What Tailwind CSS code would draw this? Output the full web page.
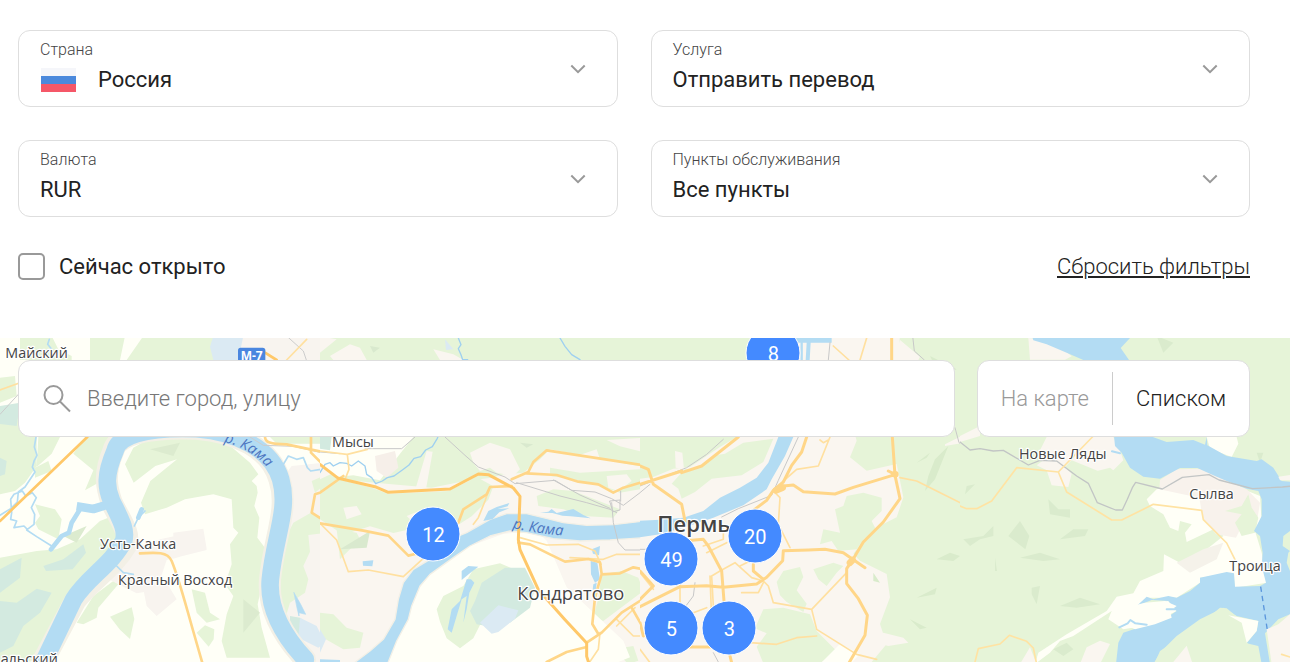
<!DOCTYPE html>
<html lang="ru">
<head>
  <meta charset="UTF-8">
  <meta name="viewport" content="width=device-width, initial-scale=1.0">
  <title>Пункты обслуживания</title>
  <script src="https://cdn.jsdelivr.net/npm/@tailwindcss/browser@4"></script>
  <style>
    body { font-family: Roboto, sans-serif; }
  </style>
</head>
<body class="min-h-screen flex flex-col bg-white text-[#222]">

<!-- Filters -->
<form class="pt-[30px] pb-[58px] pl-[18px] pr-10">
  <div class="grid grid-cols-2 gap-[33px]">
    <div class="h-[77px] flex items-center border border-[#dedede] rounded-xl pl-[21px] pr-[31px]">
      <div class="flex-1 pt-0.5">
        <label for="country" class="block text-base leading-5 font-light text-[#444]">Страна</label>
        <div class="flex items-center gap-[22px] h-10">
          <svg class="w-9 h-6" viewBox="0 0 36 24" aria-hidden="true">
            <path fill="#f5f6fa" d="M1 0h35v8H1z"/>
            <path fill="#4b89dc" d="M1 8h35v8H1z"/>
            <path fill="#f55768" d="M1 16h35v8H1z"/>
          </svg>
          <select id="country" class="flex-1 appearance-none bg-transparent text-[22px] leading-8"><option>Россия</option></select>
        </div>
      </div>
      <svg class="w-4 h-4" viewBox="0 0 16 16" fill="none" stroke="#999" stroke-width="2" aria-hidden="true"><path d="M1.300 4.500 8 11.200l6.700-6.700"/></svg>
    </div>
    <div class="h-[77px] flex items-center border border-[#dedede] rounded-xl pl-[21px] pr-[31px]">
      <div class="flex-1 pt-0.5">
        <label for="service" class="block text-base leading-5 font-light text-[#444]">Услуга</label>
        <div class="flex items-center h-10">
          <select id="service" class="flex-1 appearance-none bg-transparent text-[22px] leading-8"><option>Отправить перевод</option></select>
        </div>
      </div>
      <svg class="w-4 h-4" viewBox="0 0 16 16" fill="none" stroke="#999" stroke-width="2" aria-hidden="true"><path d="M1.300 4.500 8 11.200l6.700-6.700"/></svg>
    </div>
    <div class="h-[77px] flex items-center border border-[#dedede] rounded-xl pl-[21px] pr-[31px]">
      <div class="flex-1 pt-0.5">
        <label for="currency" class="block text-base leading-5 font-light text-[#444]">Валюта</label>
        <div class="flex items-center h-10">
          <select id="currency" class="flex-1 appearance-none bg-transparent text-[22px] leading-8"><option>RUR</option></select>
        </div>
      </div>
      <svg class="w-4 h-4" viewBox="0 0 16 16" fill="none" stroke="#999" stroke-width="2" aria-hidden="true"><path d="M1.300 4.500 8 11.200l6.700-6.700"/></svg>
    </div>
    <div class="h-[77px] flex items-center border border-[#dedede] rounded-xl pl-[21px] pr-[31px]">
      <div class="flex-1 pt-0.5">
        <label for="points" class="block text-base leading-5 font-light text-[#444]">Пункты обслуживания</label>
        <div class="flex items-center h-10">
          <select id="points" class="flex-1 appearance-none bg-transparent text-[22px] leading-8"><option>Все пункты</option></select>
        </div>
      </div>
      <svg class="w-4 h-4" viewBox="0 0 16 16" fill="none" stroke="#999" stroke-width="2" aria-hidden="true"><path d="M1.300 4.500 8 11.200l6.700-6.700"/></svg>
    </div>
  </div>
  <div class="mt-9 flex items-center justify-between text-[22px] leading-[27px]">
    <label class="flex items-center gap-3.5">
      <input type="checkbox" class="appearance-none w-[27px] h-[27px] border-2 border-[#999] rounded-[5px] bg-white checked:bg-[#448aff]">
      Сейчас открыто
    </label>
    <button type="reset" class="font-light underline underline-offset-2 decoration-2 decoration-[#222]">Сбросить фильтры</button>
  </div>
</form>

<!-- Map -->
<main class="relative flex-1 min-h-[324px] overflow-hidden bg-[#e6f4d8]">
  <svg class="absolute inset-0 w-full h-full" viewBox="0 0 3870 972" preserveAspectRatio="xMidYMin slice" fill="none" stroke-linejoin="round" stroke-linecap="round" role="img" aria-label="Карта Перми">

    <!-- Tile 1 -->
    <svg x="0" y="-6" width="962" height="984">
      <path fill="#fffff7" d="M0 0h970v984H0z"/>
      <g fill="#e6f4d8">
        <path d="M60 0h95l20 40 40 20v12H60zM270 0h105l-15 72h-90zM430 0h300l90 72H380zM0 125l45-5 5 60-50 20zM0 225h110v165l-35 50-30 25-45 10zM115 303h65l-25 50-45 40zM255 303h110l-55 90-20 50-35 20 25-60-60-50z"/>
        <path d="M375 385l25-50 45-25 115-8 120 18 70 60 25 35-20 20 15 15 3 20-10 40 15 35-6 60 30 40-14 90-15 70 12 70 25 90H680l-15-50 15-80 20-55-25-35 20-60-5-60 25-35-15-15-5-85-55-15-85 15-55 25-65 20-12-35 28-65 80-65-65 20-65 50z"/>
        <path d="M0 665l110-20 60-5 70-30 60-55 25-10 30 50-10 50-115 110-50 70-40 80-40 80-100 5z"/>
        <path d="M105 505l60 15 20 30-10 60-60-30-10-20 15-20zM330 842l65-28 8 35-13 60-30-28zM590 890l25-22 28 12-2 30-15 22zM575 760l40 10 15 60 30 20-40 10-30-30zM230 860l50-80 60-45 15 10-60 70-5 30-40 20zM105 395l40-20 10 30-50 20z"/>
      </g>
      <g fill="#dcebcf"><path d="M730 790l50 40-50 60zM450 340l90-20-20 40zM190 600l70-30-30 50z"/></g>
      <g fill="#f8f4ef">
        <path d="M400 640l80-30 130-28 10 60-120 30-30 90-60 10-80-40zM520 590l90-12 10 60-100 30z"/>
        <path d="M845 430l30-40 95-10v604H910l-60-120-20-90 40-200z"/>
        <path d="M430 760l70-20 30 50-60 50-30-30zM640 0h330v90H650z"/>
      </g>
      <g fill="#e6f4d8">
        <path d="M842 720l18-120 20-40 50-28 35 10v50l-40 5 5 50-20 43 15 40-10 40-45 30-15 50-15-50zM935 435l35-15v30l-25 20zM810 303h150v20H830z"/>
      </g>
      <g fill="#d3eae0">
        <path d="M0 700l65-35-5 60-60 45zM0 795l50 5 60-42 45 12-35 60-50 40-30 60-40 20zM130 690l60-20 60-45 8 25-40 50-80 5zM0 210l60-10-10 70-50-6zM0 365l20 10-5 40-15 5zM870 840l30 5 40 30-40 40-30-40z"/>
      </g>
      <path fill="#dbeaf3" d="M640 0h90l-15 72h-75l-10-40zM900 845l50 25 25 50-20 15-60-30z"/>
      <!-- river with its banks -->
      <path stroke="#f3f0e6" stroke-width="66" d="M590 278C430 272 350 300 340 345c-30 70-20 110-5 155 30 60 55 90 45 125-40 70-110 110-155 170L125 984M590 278c120 10 222 60 248 152 30 90-15 170-28 300-8 90 40 170 105 240"/>
      <g stroke="#b3dcf3">
        <path stroke-width="53" d="M590 278C430 272 355 300 345 345c-30 70-28 110-10 150 28 58 45 85 36 120-35 70-110 110-150 175L128 984M590 278c120 10 225 60 252 152 26 90-18 170-31 300-8 90 40 170 105 240"/>
        <path stroke-width="26" stroke-linecap="butt" d="M325 505l-45 14-50-8"/>
        <path stroke-width="14" d="M240 520l-25 40-8 30-22 10-32 40M415 545l10-25"/>
        <path stroke-width="5" d="M80 582l30 20 45 28M108 303l-5 30 8 25-8 15-6 20 8 15-30 45-20 15-3 30-20 20-32 20M35 530l-3 20 18 5-8 20 30-5 10 10 20-15 2-30-10-20 15-30-12-15-20 10-10-15-25 10-10 15zM148 10l-5 15 12 15M850 385l15-25 25 10 20-5 12 30 10 10 30-5M403 570l12-25 20-20M350 690l20 20 30 5"/>
        <path fill="#b3dcf3" stroke-width="2" d="M882 770l20 35 15 30-20-5v10l-5-20z"/>
      </g>
      <!-- roads -->
      <path stroke="#ccc" stroke-width="3" d="M0 235l55-60M860 0l50 45 10 30M750 303l40 25 90 3 80 18"/>
      <path stroke="#ffe0a0" stroke-width="5" d="M0 162l60-22M860 72l60-62"/>
      <g stroke="#ffc869" stroke-width="8">
        <path d="M0 555l262-252M795 50l35 22"/>
        <path stroke="#ffd688" d="M420 652c50-3 83-5 95 23 25 60 35 110 93 309M795 303c0 15 15 22 65 22l105 22M933 303v47l60 60M990 460l-45 15-10 55 58 37"/>
      </g>
    </svg>

    <!-- Tile 2 -->
    <svg x="960" y="-6" width="962" height="984">
      <path fill="#faf6f0" d="M0 0h970v984H0z"/>
      <g fill="#e6f4d8">
        <path d="M0 0h970v80H0zM270 303h700v90L690 340l-30 30-50 40-60 5-35 10-80 10-100 20-120-10L50 430l-50 40V430z"/>
        <path d="M0 475l55-45 100 25 50 18 180-8 85-42 50 28-15 40-50 50-40 25-25 10-80-5-90 20-70-20-80 25-70-46z"/>
        <path d="M650 480l50-20 60 5 140 55-20 25-90-5-60-20-75-10zM50 580l60 10 10 20-60 60zM690 395l90 15 180-10v60l-60 10-60-20-80-20-70-10z"/>
        <path d="M845 715l60-10 50 20 15 40-80 60-40 30-30-10 15-60zM0 830l40 5 40 40 50 15-10 45-50 5-70-40zM880 940l60-10 15 44-30 10z"/>
      </g>
      <g fill="#faf6f0">
        <path d="M30 60l60-35 30 10 20 37H40zM340 40l60 15 30 17h-70zM0 0l50 10L0 50zM320 345l18 2-20 112-30-5zM450 350l60-30 60 20 30 60-20 20-50-10-20-15-30 10-20-25zM770 360l60-20 20 60-40-10zM860 420l60-5 15 20-40 30-30-10zM260 540l50-20 30 15-70 15zM70 515l40-5 15 25-45 15zM860 312l100-6v40l-60-15z"/>
      </g>
      <path fill="#fffff7" d="M0 303h280l-40 50-60 80-80-15-50 5-50-40zM190 984l60-110 50-120 50-60 90-60 110-40 100-10 30 30 60 140 170 160 20 50-50 20z"/>
      <path fill="#f6efe9" d="M165 360l60-15 10 50-35 30-30-20z"/>
      <g fill="#d9e9ce"><path d="M60 640l90-55-10 50zM150 30l30 5-20 15zM600 320l40 5-20 10z"/></g>
      <path fill="#e6f4d8" d="M350 820l20-40 60-30 30-50 80-18 60 25 20 50-80 90-60 20-20 40-40 30-40-30-20-50z"/>
      <path fill="#d3eae0" d="M485 740l70-45 60 0 30 60-15 60-60 45-40-15-30 25-30-5-20-40 15-30zM0 303h35l-5 40-30-5z"/>
      <path fill="#dbeaf3" d="M480 860l55-52 60 15-10 25-50 40-20 5zM375 10l25 30-22 2zM0 880l18 30-18 40z"/>
      <!-- river -->
      <path fill="#b3dcf3" stroke="#f3f0e6" stroke-width="4" d="M1000 552L880 566 800 568 730 560 670 545 620 533 560 533 510 550 440 590 390 610 330 670 280 700 250 740 235 790 225 850 190 910 150 945 90 990H200L230 915 265 850 275 810 300 750 330 715 400 665 450 630 510 600 570 585 620 590 700 608 780 615 870 612 930 608 1000 603z"/>
      <g fill="#b3dcf3">
        <path d="M490 555l15-30 25-12 38-12-5 10-30 8 35-2-30 12-20 20zM660 530l25-3 10-8 15 12 50-12 30 18 22 10-60-6-25-2-30-8zM425 705l20-15 30 2-20 15-30 25v-20zM128 676l32-3-3 18-28-2zM815 640l25-10-3 28-18-5zM812 675l20 5 8 50-15 10-12-25zM820 745l10-5-2 18-10 3zM0 970l60 2v12H0z"/>
        <path d="M440 730l-20 65-25 25-12 60 12 10 15-50 15-50 15-10-5 40-5 40 10-40 8-50 15-30-10-10z"/>
      </g>
      <path stroke="#9fd0f0" stroke-width="4" d="M0 410l15-25 15-5 10 10 20-10 20 2 15 8 20-15 20 15 5 25 15 10 12 18 20-8 15-10 20-5 25-18 20-15 15-20 20-5 15-20 20-10 15-25 8-20M415 6l8 20-8 12 8 18 5 15h15M720 6l15 25 20 25 25 15"/>
      <!-- railways -->
      <g stroke="#c8c8c8" stroke-width="3">
        <path d="M375 303l60 55 40 35 80 30 30 20 120-10 50 30 70 5 50 20 35 20 90-68M590 440l130 40 80 20 70 20 20 10M875 500l5 60 15 60 20 22h50M135 338h110l40-35M0 348l60 5M870 495l30-3v30l-20 5zM700 432l80 45 90 40M902 465v30"/>
      </g>
      <!-- roads -->
      <g stroke="#ffe0a0" stroke-width="5">
        <path d="M0 562l50 50 35 95 60-5 105 20 60-55M460 565l15-20 20-50 10-30M600 605l80 22 95-2 50 20 18 40M750 665l100 5 40-15h80M75 430l12-30-5-45 60-15M0 345l80 10M890 870l55-55M890 850l50 50h30M840 890l-5 50-30 44"/>
      </g>
      <g stroke="#ffd688" stroke-width="8">
        <path d="M0 470l70-50M0 562l130 22 75 15 60 60 20-5M415 560l15-40 70-45 10-22 65-3M575 430l50-22 15-30 40-35 290 45 20 30M620 412l90 5 65 20 60 8 45 25 30-15 50-15M595 620l35 5 60 30 45 22 70-8 35 10 5 35-20 70-8 80 18 30M845 715l55-3 40-18 50 10M800 920l45-30 60-60 70-45M935 815l40 70M680 978l60-30 60-15"/>
      </g>
      <path stroke="#ffc869" stroke-width="9" d="M0 385l55 42 110 25 40 17 185-10 85-45 30 2 75 40 20 25-5 130 5 30 55 120 80 90 65 70v40l8 25"/>
    </svg>

    <!-- Tile 3 -->
    <svg x="1920" y="-6" width="962" height="984">
      <path fill="#faf6f0" d="M0 0h970v984H0z"/>
      <g fill="#e6f4d8">
        <path d="M0 0h330v80H0zM780 0h190v984H690l50-60-20-60 30-80-10-70-80-40-20-20 50-70 80-40 20-60-20-100-90 20-50-40 20-50-10-35h110zM0 303h290l-50 30-90 60-50 5-60 25-40 5z"/>
        <path d="M310 320l90-12-30 70-65 40-90 10-50 40-40 20-10-30-20-15 40-45 20 5 30-15 40-30 30-5zM620 480l50-10 55 15v40l-30 30 20 40-40 10-25 35-55 5-20-30-35 10 10-45 50 10-15-70 25-10zM430 705l50-12 10 30-20 40 30 40-10 25-50-30-20-20-10-40zM520 700l60-20 30 10-20 20-30 40-25-20zM370 820l60-5 80 20 20 50 60 60-50 37H370l-20-50 30-40-35-15z"/>
      </g>
      <g fill="#faf6f0"><path d="M105 345l22 5 5 50-25-5zM780 12l60 50-30 60-60-20zM915 325l60-30v25l-60 10zM710 920l20-30 60 15 15 15-60 10z"/></g>
      <g fill="#d9ebcb"><path d="M830 380l40-30-10 15zM925 330l-40 100-30 35 10-45 20-50zM830 785l60-30-5 20zM700 710l20 30-20-5zM890 670l40-20 30 10-20 15zM870 60l80 40-50 20zM810 850l50 25-20 5z"/></g>
      <path fill="#fffff7" d="M540 984l60-60 60 30-30 30z"/>
      <!-- river -->
      <path fill="#b3dcf3" d="M0 554L60 551 130 545 190 525 240 485 300 455 350 425 385 380 415 303H460L435 360 395 430 380 460 310 508 220 545 130 575 60 595 0 604zM460 0h115v20H460zM500 20h12l-3 52h-12z"/>
      <path stroke="#b3dcf3" stroke-width="7" d="M485 20v52"/>
      <!-- railways -->
      <g stroke="#c8c8c8" stroke-width="3">
        <path d="M475 303l-60 130-20 45-100 40-50 25M0 450l140-55 60-40 50-45M0 470l30-25M818 0l5 45 30 27M945 275l12 45 33 22M570 20l-5 52M0 640h30M165 740l-5 40-30 40M220 950l15 28"/>
      </g>
      <!-- roads -->
      <g stroke="#ffe0a0" stroke-width="5">
        <path d="M405 470l15 15-5 80 35 70M430 435l40-35 65-10 35-87M540 312l10 8 15-8M780 425l50 10 60 30 100 50M620 710l-105 110 15 60 120 75 60 15M515 820l-115-20-15-50-15-15-35-10-50-45-45 25-25 15 5 90M305 770h50l15-30M210 720l5 130M120 700v100M0 710l40 50M270 900l60 20 80 5 60-20 60-5M160 830l40-15M0 940l30 40M580 30l50 45M680 6l-20 66M90 610l-30 50M300 690l80-40M190 630l60-20v-30M200 650l60-30"/>
      </g>
      <g stroke="#ffd688" stroke-width="9">
        <path d="M500 303l-15 45-30 40-25 50-30 25-20 30-40 30M400 465l30-15 30-3 30 20 95 7 55-20 125-38M755 0v72M757 303l8 115 15 70-50 70-60 60-30 50-20 30v45l35 45 27 50-7 60-50 86M765 415l-20-10M130 615l60-5 15 20 40 75 7 90M0 812l60-30 60-30 80-3 50 5 100-10 30-20 48-50 2-30 75-2 50-2 55 10 65 45M340 685v20l30 25M0 390l25 10 15 45M125 405L0 445M125 410l60-20 110-87M40 445l85 60 10 50M150 933h60M270 960l5 20M0 860l10 40M0 790l40-40-40-45"/>
        <path stroke-width="20" d="M765 415h1M630 680l8-8M408 463l20-8"/>
      </g>
    </svg>

    <!-- Tile 4 -->
    <svg x="2880" y="-6" width="990" height="984">
      <path fill="#e6f4d8" d="M0 0h990v984H0z"/>
      <g fill="#daebcd"><path d="M20 450l25-5-30 30zM10 610l60-10 30-30 0 30-40 10-30 20zM145 600l35-45 28 45-12 40zM300 610l40-30 45 0-10 20zM265 490l30 30 35 0 0 25-60-10zM180 665l60-15 60 20-50 5zM215 755l25-5-10 55-15-30zM300 810l60-25 60 20-70 10zM105 665l6 40h-6zM590 0l50 20-30 30zM280 940l40-20 20 20-30 20zM890 350l20 0-10 30z"/></g>
      <g fill="#faf6f0">
        <path d="M0 300l60-30v30L0 318zM260 303h200l20 40 10 30-45 45-60-25-50-20-20 20 20 20-10 40-50-5-15-45-30-15 40-30-30-15zM205 6l70 5 60 50-20 10H210zM360 984l20-50 40-20 30 10-30 60zM180 984l30-50 20 50z"/>
      </g>
      <path fill="#fffff7" d="M560 490L590 460 700 440 850 460 900 480 905 560 885 585 905 650 920 740 825 755 820 712 720 725 720 740 650 785 560 785 540 808 625 795 650 825 600 850 550 870 490 880 445 850 455 825 340 900 300 915 270 950 225 984 235 950 320 895 440 825 470 782 520 772 540 735 610 705 612 655 660 680 740 640 790 600 770 575 680 618 675 590 695 565 660 555 655 585 630 575 610 535 570 510zM740 303h90l5 20-20 40-65-25z"/>
      <path fill="#f8f2ec" d="M600 432l50-32 70-2 140 62 40 40-12 75-40-10-20 40-60-10-40-50-10-60-120-25z"/>
      <g fill="#e6f4d8"><path d="M795 525l50-15 20-35 10 40 20 30-10 45-40 10-20-40 20-25zM390 410l60-15 25 20-30 20z"/></g>
      <path fill="#f5f2ea" d="M650 680l80-40 60-20-20 50-80 40z"/>
      <!-- reservoir -->
      <g fill="#b3dcf3">
        <path d="M218 6h292l-28 30 25 36H370l-50-22-60-25-40-12z"/>
        <path d="M462 300H570L620 318 700 312 735 326 740 303 742 328 800 360 890 375 905 370 940 395 965 435 990 437V585L970 600 968 630 990 645V835L955 850 915 892 930 984H905L895 930 860 922 890 885 895 855 830 840 790 815 720 850 650 900 625 925 600 950 580 984H468L475 920 490 890 550 870 620 845 650 825 625 795 575 792 530 810 560 782 580 790 625 780 650 785 690 765 720 740 720 725 800 708 822 712 825 752 900 750 918 740 905 690 908 650 900 600 882 585 905 540 905 490 895 465 860 458 800 435 760 418 712 396 660 396 600 428 550 422 510 395 485 350 465 330z"/>
      </g>
      <path fill="#fffff7" d="M480 860l15-45 60-15 60-5 35 15-20 15 5 20-50 20-60 15z"/>
      <path stroke="#b3dcf3" stroke-width="6" d="M478 874l25-12 8-10 15 10 34 4M620 820h36M456 346l24 6"/>
      <path fill="#e6f4d8" d="M583 984L600 945 630 925 720 865 780 815 800 817 840 850 860 920 890 940 903 984zM985 650l5-5v60l-10-25z"/>
      <path fill="#fffff7" d="M805 838l90 17-5 30-30 35-15-60z"/>
      <path fill="#faf6f0" d="M635 984l45-55 18 55zM955 422l35-5v16h-30zM920 880l35-15 35-30v149h-55z"/>
      <path stroke="#5b96dc" stroke-width="4" stroke-linecap="butt" stroke-dasharray="16 12" d="M902 752l20 130"/>
      <!-- railway -->
      <path stroke="#c2c5c5" stroke-width="4" d="M0 318l30 24 30-4 40 7 30-2 75 44 35-14 50 2 60 45 35 22 27 58 55 22h20l15-32 15-35 10-16 80 20 60-35 80-8 30 16 100 26 90-5 50-5"/>
      <!-- roads -->
      <path stroke="#ffe3a3" stroke-width="5" d="M0 510l20 8h30l45-23 75-100 125 13 105-108M295 408l25 60 135 84h30l95-47 145 18 5 28 70 70 25 50M45 978l10-40 65-14 28-26 52 18 20 20 10 48M965 955l25 8"/>
    </svg>

    <!-- Road shield -->
    <rect x="714" y="29" width="82" height="52" rx="8" fill="#4a86df"/>
    <text x="755" y="66" text-anchor="middle" fill="#fff" font-family="Open Sans, sans-serif" font-size="36" font-weight="700">М-7</text>

    <!-- Place names -->
    <g fill="#444" stroke="#fff" stroke-width="7" paint-order="stroke" font-family="Open Sans, sans-serif" font-size="43" font-weight="500">
      <text x="16" y="61">Майский</text>
      <text x="300" y="634">Усть-Качка</text>
      <text x="354" y="742">Красный Восход</text>
      <text x="2" y="978">альский</text>
      <text x="996" y="327">Мысы</text>
      <text x="1552" y="786" font-size="55">Кондратово</text>
      <text x="1972" y="582" font-size="66" font-weight="600">Пермь</text>
      <text x="3057" y="363">Новые Ляды</text>
      <text x="3568" y="483">Сылва</text>
      <text x="3688" y="700">Троица</text>
    </g>
    <path id="kama-west" d="M672 312Q770 335 826 420"/>
    <path id="kama-east" d="M1538 570Q1620 590 1740 596"/>
    <g fill="#4a74c0" font-family="Open Sans, sans-serif" font-size="44" font-style="italic">
      <text><textPath href="#kama-west">р. Кама</textPath></text>
      <text><textPath href="#kama-east">р. Кама</textPath></text>
    </g>
  </svg>

  <!-- Clusters -->
  <button class="absolute left-[59.95%] top-[4.7%] -translate-1/2 size-[55px] rounded-full border border-white bg-[#448aff] text-white text-xl">8</button>
  <button class="absolute left-[33.6%] top-[60.6%] -translate-1/2 size-[55px] rounded-full border border-white bg-[#448aff] text-white text-xl">12</button>
  <button class="absolute left-[58.55%] top-[61.2%] -translate-1/2 size-[55px] rounded-full border border-white bg-[#448aff] text-white text-xl">20</button>
  <button class="absolute left-[52.05%] top-[68.3%] -translate-1/2 size-[55px] rounded-full border border-white bg-[#448aff] text-white text-xl">49</button>
  <button class="absolute left-[52.05%] top-[89.6%] -translate-1/2 size-[55px] rounded-full border border-white bg-[#448aff] text-white text-xl">5</button>
  <button class="absolute left-[56.55%] top-[89.6%] -translate-1/2 size-[55px] rounded-full border border-white bg-[#448aff] text-white text-xl">3</button>

  <!-- Search bar over the map -->
  <div class="relative flex gap-[22px] pt-[22px] pl-[18px] pr-10 text-[22px] font-light">
    <label class="flex-1 h-[77px] flex items-center gap-4 border border-[#dedede] rounded-xl bg-white px-6">
      <svg class="w-7 h-7" viewBox="0 0 28 28" fill="none" stroke="#999" stroke-width="2" aria-hidden="true">
        <circle cx="10.500" cy="10" r="9"/><path d="M17 16.500l10 10"/>
      </svg>
      <input type="text" aria-label="Введите город, улицу" placeholder="Введите город, улицу" class="flex-1 outline-none placeholder:text-[#777]">
    </label>
    <div class="h-[77px] flex items-center border border-[#dedede] rounded-xl bg-white">
      <button class="h-[53px] px-[23px] border-r border-[#ccc] text-[#999]">На карте</button>
      <button class="h-[53px] px-[23px]">Списком</button>
    </div>
  </div>
</main>
</body>
</html>
